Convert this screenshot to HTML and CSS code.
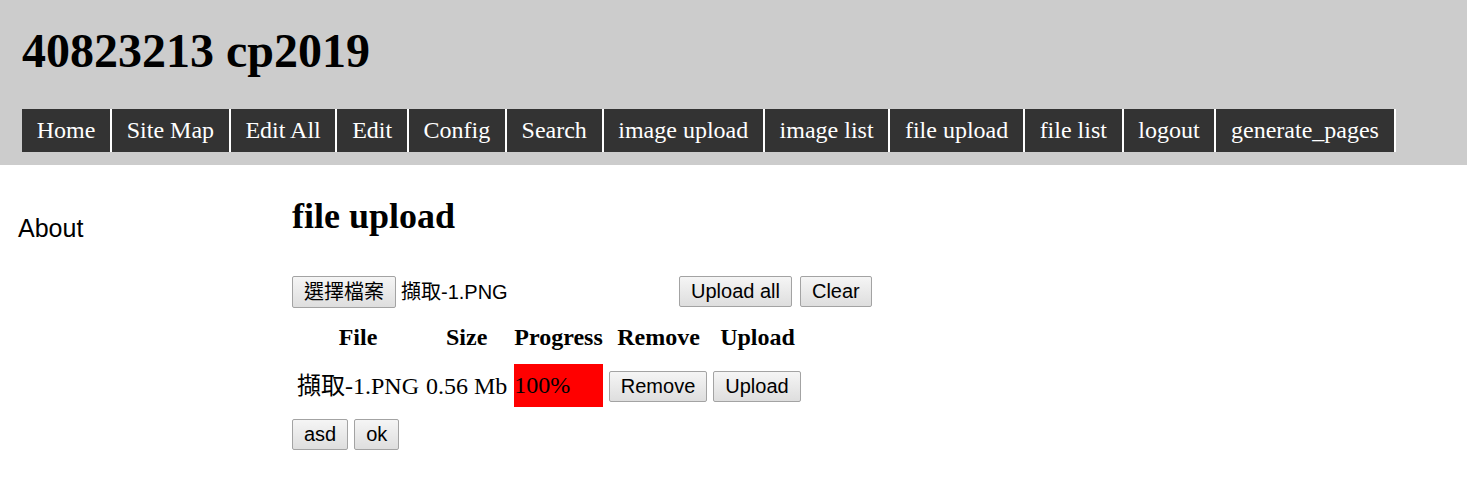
FILE: index.html
```html
<!DOCTYPE html>
<html lang="zh-Hant">
<head>
<meta charset="utf-8">
<title>40823213 cp2019</title>
<link rel="stylesheet" href="styles.css">
</head>
<body>
<header class="site-header">
  <h1 class="site-title">40823213 cp2019</h1>
  <nav class="menu">
    <ul class="menu-list">
      <li><a href="#">Home</a></li>
      <li><a href="#">Site Map</a></li>
      <li><a href="#">Edit All</a></li>
      <li><a href="#">Edit</a></li>
      <li><a href="#">Config</a></li>
      <li><a href="#">Search</a></li>
      <li><a href="#">image upload</a></li>
      <li><a href="#">image list</a></li>
      <li><a href="#">file upload</a></li>
      <li><a href="#">file list</a></li>
      <li><a href="#">logout</a></li>
      <li><a href="#">generate_pages</a></li>
    </ul>
  </nav>
</header>
<div class="layout">
  <aside class="sidebar">
    <a class="side-link" href="#">About</a>
  </aside>
  <main class="content">
    <h2 class="page-title">file upload</h2>
    <div class="upload-bar">
      <span class="file-input"><button class="btn btn-file" type="button">選擇檔案</button><span class="file-name">擷取-1.PNG</span></span>
      <button class="btn btn-upload-all" type="button">Upload all</button>
      <button class="btn btn-clear" type="button">Clear</button>
    </div>
    <table class="file-table">
      <thead>
        <tr><th>File</th><th>Size</th><th>Progress</th><th>Remove</th><th>Upload</th></tr>
      </thead>
      <tbody>
        <tr>
          <td class="cell-name">擷取-1.PNG</td>
          <td>0.56 Mb</td>
          <td><div class="progress">100%</div></td>
          <td class="cell-btn"><button class="btn" type="button">Remove</button></td>
          <td class="cell-btn"><button class="btn" type="button">Upload</button></td>
        </tr>
      </tbody>
    </table>
    <div class="actions">
      <button class="btn" type="button">asd</button>
      <button class="btn btn-ok" type="button">ok</button>
    </div>
  </main>
</div>
</body>
</html>
```
FILE: styles.css
```css
html, body {
  margin: 0;
  padding: 0;
  background: #ffffff;
}

body {
  font-family: "Liberation Serif", "Noto Sans CJK TC", serif;
  font-size: 24px;
  color: #000;
}

.site-header {
  background: #cccccc;
  padding: 23px 22px 13px;
}

.site-title {
  margin: 0 0 31px;
  font-size: 48px;
  font-weight: bold;
  line-height: normal;
}

.menu-list {
  display: flex;
  list-style: none;
  margin: 0;
  padding: 0;
}

.menu-list a {
  display: block;
  padding: 8px 14.7px;
  background: #333333;
  color: #ffffff;
  text-decoration: none;
  border-right: 2px solid #ffffff;
  line-height: normal;
  white-space: nowrap;
}

.layout {
  display: flex;
}

.sidebar {
  width: 274px;
  flex: none;
  padding: 49px 0 0 18px;
}

.side-link {
  font-family: "Liberation Sans", "Noto Sans CJK TC", sans-serif;
  font-size: 25px;
  color: #000;
  text-decoration: none;
}

.content {
  flex: 1;
}

.page-title {
  margin: 30px 0 39px;
  font-size: 36px;
  font-weight: bold;
  line-height: normal;
}

.btn {
  font-family: "Liberation Sans", "Noto Sans CJK TC", sans-serif;
  font-size: 20px;
  line-height: 23px;
  height: 31px;
  color: #000;
  padding: 3px 11px;
  border: 1px solid #a3a3a3;
  border-radius: 2px;
  background: linear-gradient(#f5f5f5, #dedede);
  margin: 0;
}

.btn-file {
  height: 32px;
}

.upload-bar {
  display: flex;
  align-items: flex-start;
}

.file-input {
  display: flex;
  align-items: center;
  width: 381px;
  flex: none;
}

.file-name {
  margin-left: 5px;
  font-family: "Liberation Sans", "Noto Sans CJK TC", sans-serif;
  font-size: 20px;
  line-height: 23px;
}

.btn-upload-all {
  margin-left: 6px;
}

.btn-clear {
  margin-left: 8px;
}

.file-table {
  margin-top: 10px;
  border-collapse: separate;
  border-spacing: 3px;
}

.file-table th {
  padding: 2px 2px 8px;
  font-weight: bold;
  text-align: center;
  line-height: 28px;
}

.file-table td {
  padding: 2px;
  line-height: 28px;
  white-space: nowrap;
}

.file-table td.cell-btn {
  padding: 3px 2px 1px 1px;
}

.cell-name {
  padding-left: 3px;
}

.progress {
  background: #ff0000;
  height: 43px;
  line-height: 43px;
}

.actions {
  margin-top: 7px;
  display: flex;
}

.btn-ok {
  margin-left: 6px;
}
```
